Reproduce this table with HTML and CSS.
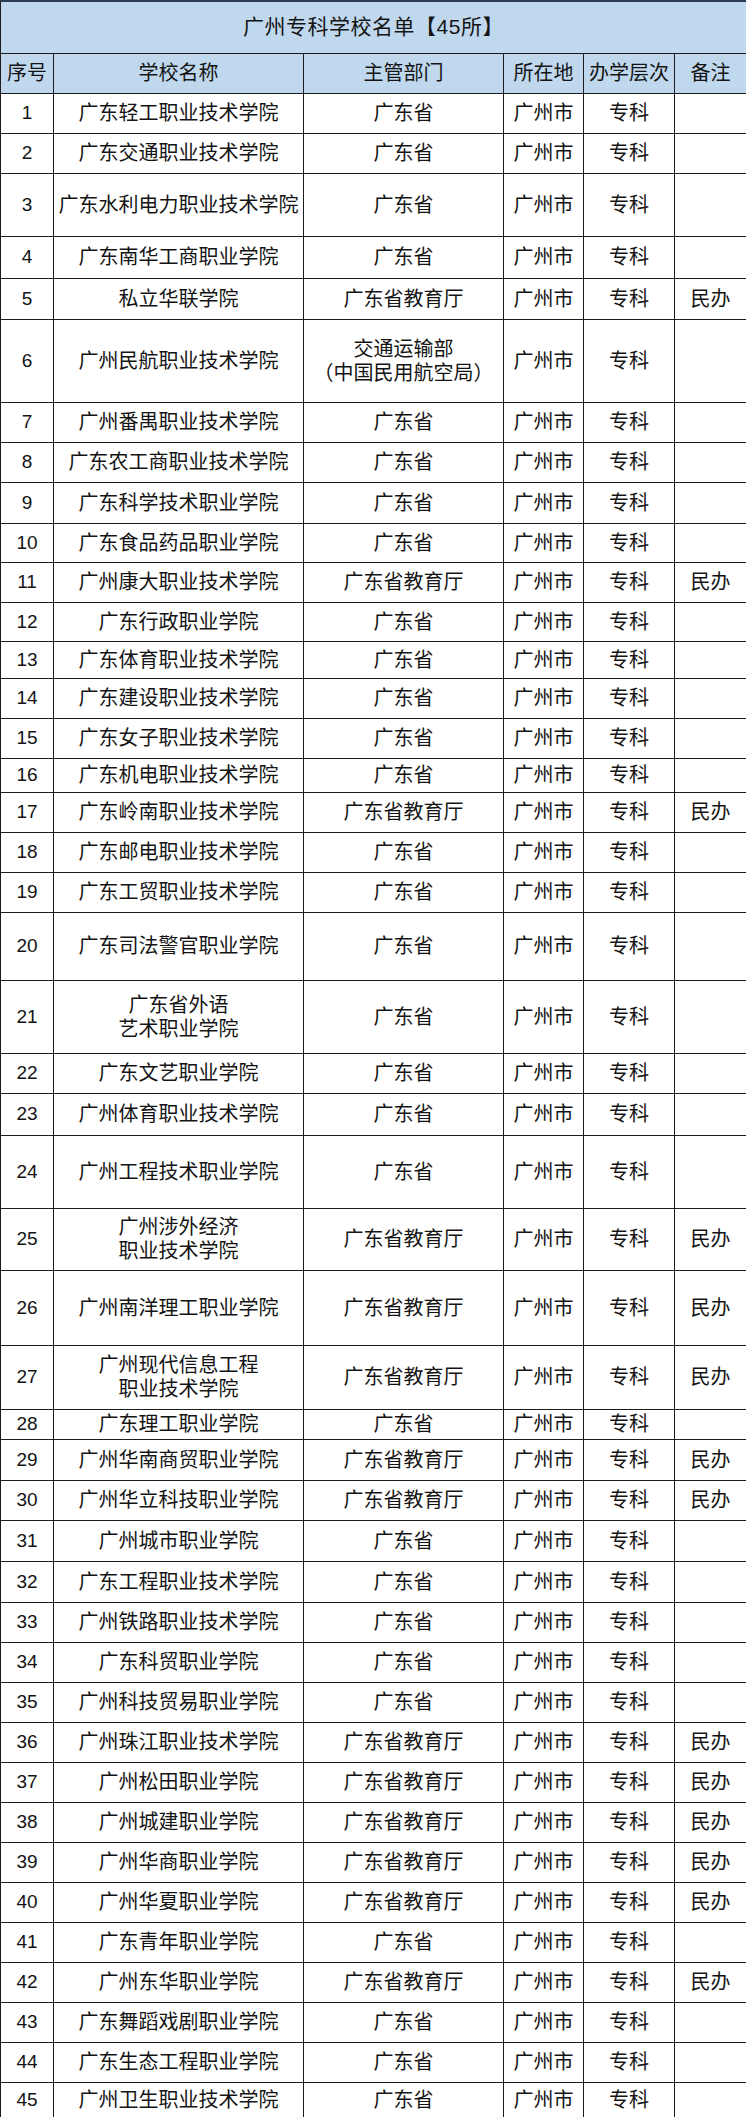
FILE: index.html
```html
<!DOCTYPE html>
<html lang="zh-CN">
<head>
<meta charset="utf-8">
<title>广州专科学校名单</title>
<link rel="stylesheet" href="styles.css">
</head>
<body>
<table class="list">
  <colgroup>
    <col class="c-no"><col class="c-name"><col class="c-dept"><col class="c-loc"><col class="c-level"><col class="c-note">
  </colgroup>
  <thead>
    <tr class="title-row"><th colspan="6" class="title">广州专科学校名单【45所】</th></tr>
    <tr class="head-row"><th>序号</th><th>学校名称</th><th>主管部门</th><th>所在地</th><th>办学层次</th><th>备注</th></tr>
  </thead>
  <tbody>
    <tr class="h40"><td class="no">1</td><td>广东轻工职业技术学院</td><td>广东省</td><td>广州市</td><td>专科</td><td></td></tr>
    <tr class="h40"><td class="no">2</td><td>广东交通职业技术学院</td><td>广东省</td><td>广州市</td><td>专科</td><td></td></tr>
    <tr class="h63"><td class="no">3</td><td>广东水利电力职业技术学院</td><td>广东省</td><td>广州市</td><td>专科</td><td></td></tr>
    <tr class="h42"><td class="no">4</td><td>广东南华工商职业学院</td><td>广东省</td><td>广州市</td><td>专科</td><td></td></tr>
    <tr class="h41"><td class="no">5</td><td>私立华联学院</td><td>广东省教育厅</td><td>广州市</td><td>专科</td><td>民办</td></tr>
    <tr class="h83"><td class="no">6</td><td>广州民航职业技术学院</td><td class="two">交通运输部<br>（中国民用航空局）</td><td>广州市</td><td>专科</td><td></td></tr>
    <tr class="h40"><td class="no">7</td><td>广州番禺职业技术学院</td><td>广东省</td><td>广州市</td><td>专科</td><td></td></tr>
    <tr class="h40"><td class="no">8</td><td>广东农工商职业技术学院</td><td>广东省</td><td>广州市</td><td>专科</td><td></td></tr>
    <tr class="h41"><td class="no">9</td><td>广东科学技术职业学院</td><td>广东省</td><td>广州市</td><td>专科</td><td></td></tr>
    <tr class="h39"><td class="no">10</td><td>广东食品药品职业学院</td><td>广东省</td><td>广州市</td><td>专科</td><td></td></tr>
    <tr class="h40"><td class="no">11</td><td>广州康大职业技术学院</td><td>广东省教育厅</td><td>广州市</td><td>专科</td><td>民办</td></tr>
    <tr class="h39"><td class="no">12</td><td>广东行政职业学院</td><td>广东省</td><td>广州市</td><td>专科</td><td></td></tr>
    <tr class="h37"><td class="no">13</td><td>广东体育职业技术学院</td><td>广东省</td><td>广州市</td><td>专科</td><td></td></tr>
    <tr class="h40"><td class="no">14</td><td>广东建设职业技术学院</td><td>广东省</td><td>广州市</td><td>专科</td><td></td></tr>
    <tr class="h40"><td class="no">15</td><td>广东女子职业技术学院</td><td>广东省</td><td>广州市</td><td>专科</td><td></td></tr>
    <tr class="h34"><td class="no">16</td><td>广东机电职业技术学院</td><td>广东省</td><td>广州市</td><td>专科</td><td></td></tr>
    <tr class="h40"><td class="no">17</td><td>广东岭南职业技术学院</td><td>广东省教育厅</td><td>广州市</td><td>专科</td><td>民办</td></tr>
    <tr class="h40"><td class="no">18</td><td>广东邮电职业技术学院</td><td>广东省</td><td>广州市</td><td>专科</td><td></td></tr>
    <tr class="h40"><td class="no">19</td><td>广东工贸职业技术学院</td><td>广东省</td><td>广州市</td><td>专科</td><td></td></tr>
    <tr class="h68"><td class="no">20</td><td>广东司法警官职业学院</td><td>广东省</td><td>广州市</td><td>专科</td><td></td></tr>
    <tr class="h73"><td class="no">21</td><td class="two">广东省外语<br>艺术职业学院</td><td>广东省</td><td>广州市</td><td>专科</td><td></td></tr>
    <tr class="h40"><td class="no">22</td><td>广东文艺职业学院</td><td>广东省</td><td>广州市</td><td>专科</td><td></td></tr>
    <tr class="h42"><td class="no">23</td><td>广州体育职业技术学院</td><td>广东省</td><td>广州市</td><td>专科</td><td></td></tr>
    <tr class="h73"><td class="no">24</td><td>广州工程技术职业学院</td><td>广东省</td><td>广州市</td><td>专科</td><td></td></tr>
    <tr class="h62"><td class="no">25</td><td class="two">广州涉外经济<br>职业技术学院</td><td>广东省教育厅</td><td>广州市</td><td>专科</td><td>民办</td></tr>
    <tr class="h75"><td class="no">26</td><td>广州南洋理工职业学院</td><td>广东省教育厅</td><td>广州市</td><td>专科</td><td>民办</td></tr>
    <tr class="h64"><td class="no">27</td><td class="two">广州现代信息工程<br>职业技术学院</td><td>广东省教育厅</td><td>广州市</td><td>专科</td><td>民办</td></tr>
    <tr class="h30"><td class="no">28</td><td>广东理工职业学院</td><td>广东省</td><td>广州市</td><td>专科</td><td></td></tr>
    <tr class="h41"><td class="no">29</td><td>广州华南商贸职业学院</td><td>广东省教育厅</td><td>广州市</td><td>专科</td><td>民办</td></tr>
    <tr class="h40"><td class="no">30</td><td>广州华立科技职业学院</td><td>广东省教育厅</td><td>广州市</td><td>专科</td><td>民办</td></tr>
    <tr class="h41"><td class="no">31</td><td>广州城市职业学院</td><td>广东省</td><td>广州市</td><td>专科</td><td></td></tr>
    <tr class="h41"><td class="no">32</td><td>广东工程职业技术学院</td><td>广东省</td><td>广州市</td><td>专科</td><td></td></tr>
    <tr class="h40"><td class="no">33</td><td>广州铁路职业技术学院</td><td>广东省</td><td>广州市</td><td>专科</td><td></td></tr>
    <tr class="h40"><td class="no">34</td><td>广东科贸职业学院</td><td>广东省</td><td>广州市</td><td>专科</td><td></td></tr>
    <tr class="h40"><td class="no">35</td><td>广州科技贸易职业学院</td><td>广东省</td><td>广州市</td><td>专科</td><td></td></tr>
    <tr class="h40"><td class="no">36</td><td>广州珠江职业技术学院</td><td>广东省教育厅</td><td>广州市</td><td>专科</td><td>民办</td></tr>
    <tr class="h40"><td class="no">37</td><td>广州松田职业学院</td><td>广东省教育厅</td><td>广州市</td><td>专科</td><td>民办</td></tr>
    <tr class="h40"><td class="no">38</td><td>广州城建职业学院</td><td>广东省教育厅</td><td>广州市</td><td>专科</td><td>民办</td></tr>
    <tr class="h40"><td class="no">39</td><td>广州华商职业学院</td><td>广东省教育厅</td><td>广州市</td><td>专科</td><td>民办</td></tr>
    <tr class="h40"><td class="no">40</td><td>广州华夏职业学院</td><td>广东省教育厅</td><td>广州市</td><td>专科</td><td>民办</td></tr>
    <tr class="h40"><td class="no">41</td><td>广东青年职业学院</td><td>广东省</td><td>广州市</td><td>专科</td><td></td></tr>
    <tr class="h40"><td class="no">42</td><td>广州东华职业学院</td><td>广东省教育厅</td><td>广州市</td><td>专科</td><td>民办</td></tr>
    <tr class="h40"><td class="no">43</td><td>广东舞蹈戏剧职业学院</td><td>广东省</td><td>广州市</td><td>专科</td><td></td></tr>
    <tr class="h40"><td class="no">44</td><td>广东生态工程职业学院</td><td>广东省</td><td>广州市</td><td>专科</td><td></td></tr>
    <tr class="h35"><td class="no">45</td><td>广州卫生职业技术学院</td><td>广东省</td><td>广州市</td><td>专科</td><td></td></tr>
  </tbody>
</table>
</body>
</html>
```
FILE: styles.css
```css
html, body {
  margin: 0;
  padding: 0;
  background: #ffffff;
}

body {
  font-family: "Liberation Sans", "Noto Sans CJK SC", sans-serif;
  color: #141414;
}

.list {
  width: 746px;
  table-layout: fixed;
  border-collapse: collapse;
  border-spacing: 0;
}

.c-no { width: 53px; }
.c-name { width: 250px; }
.c-dept { width: 200px; }
.c-loc { width: 80px; }
.c-level { width: 91px; }
.c-note { width: 72px; }

.list th,
.list td {
  border: 1px solid #1c1c1c;
  padding: 0;
  text-align: center;
  vertical-align: middle;
  font-size: 20px;
  font-weight: 400;
  line-height: 24px;
  white-space: nowrap;
  overflow: hidden;
}

.title-row { height: 52px; }
.title-row .title {
  background: #c0d8ee;
  border-top: 2px solid #2b3a55;
  font-size: 21px;
  letter-spacing: 0.5px;
}

.head-row { height: 40px; }
.head-row th { background: #c0d8ee; }

.list td.no { font-size: 19px; }

.h30 { height: 30px; }
.h34 { height: 34px; }
.h35 { height: 35px; }
.h37 { height: 37px; }
.h39 { height: 39px; }
.h40 { height: 40px; }
.h41 { height: 41px; }
.h42 { height: 42px; }
.h62 { height: 62px; }
.h63 { height: 63px; }
.h64 { height: 64px; }
.h68 { height: 68px; }
.h73 { height: 73px; }
.h75 { height: 75px; }
.h83 { height: 83px; }
```
